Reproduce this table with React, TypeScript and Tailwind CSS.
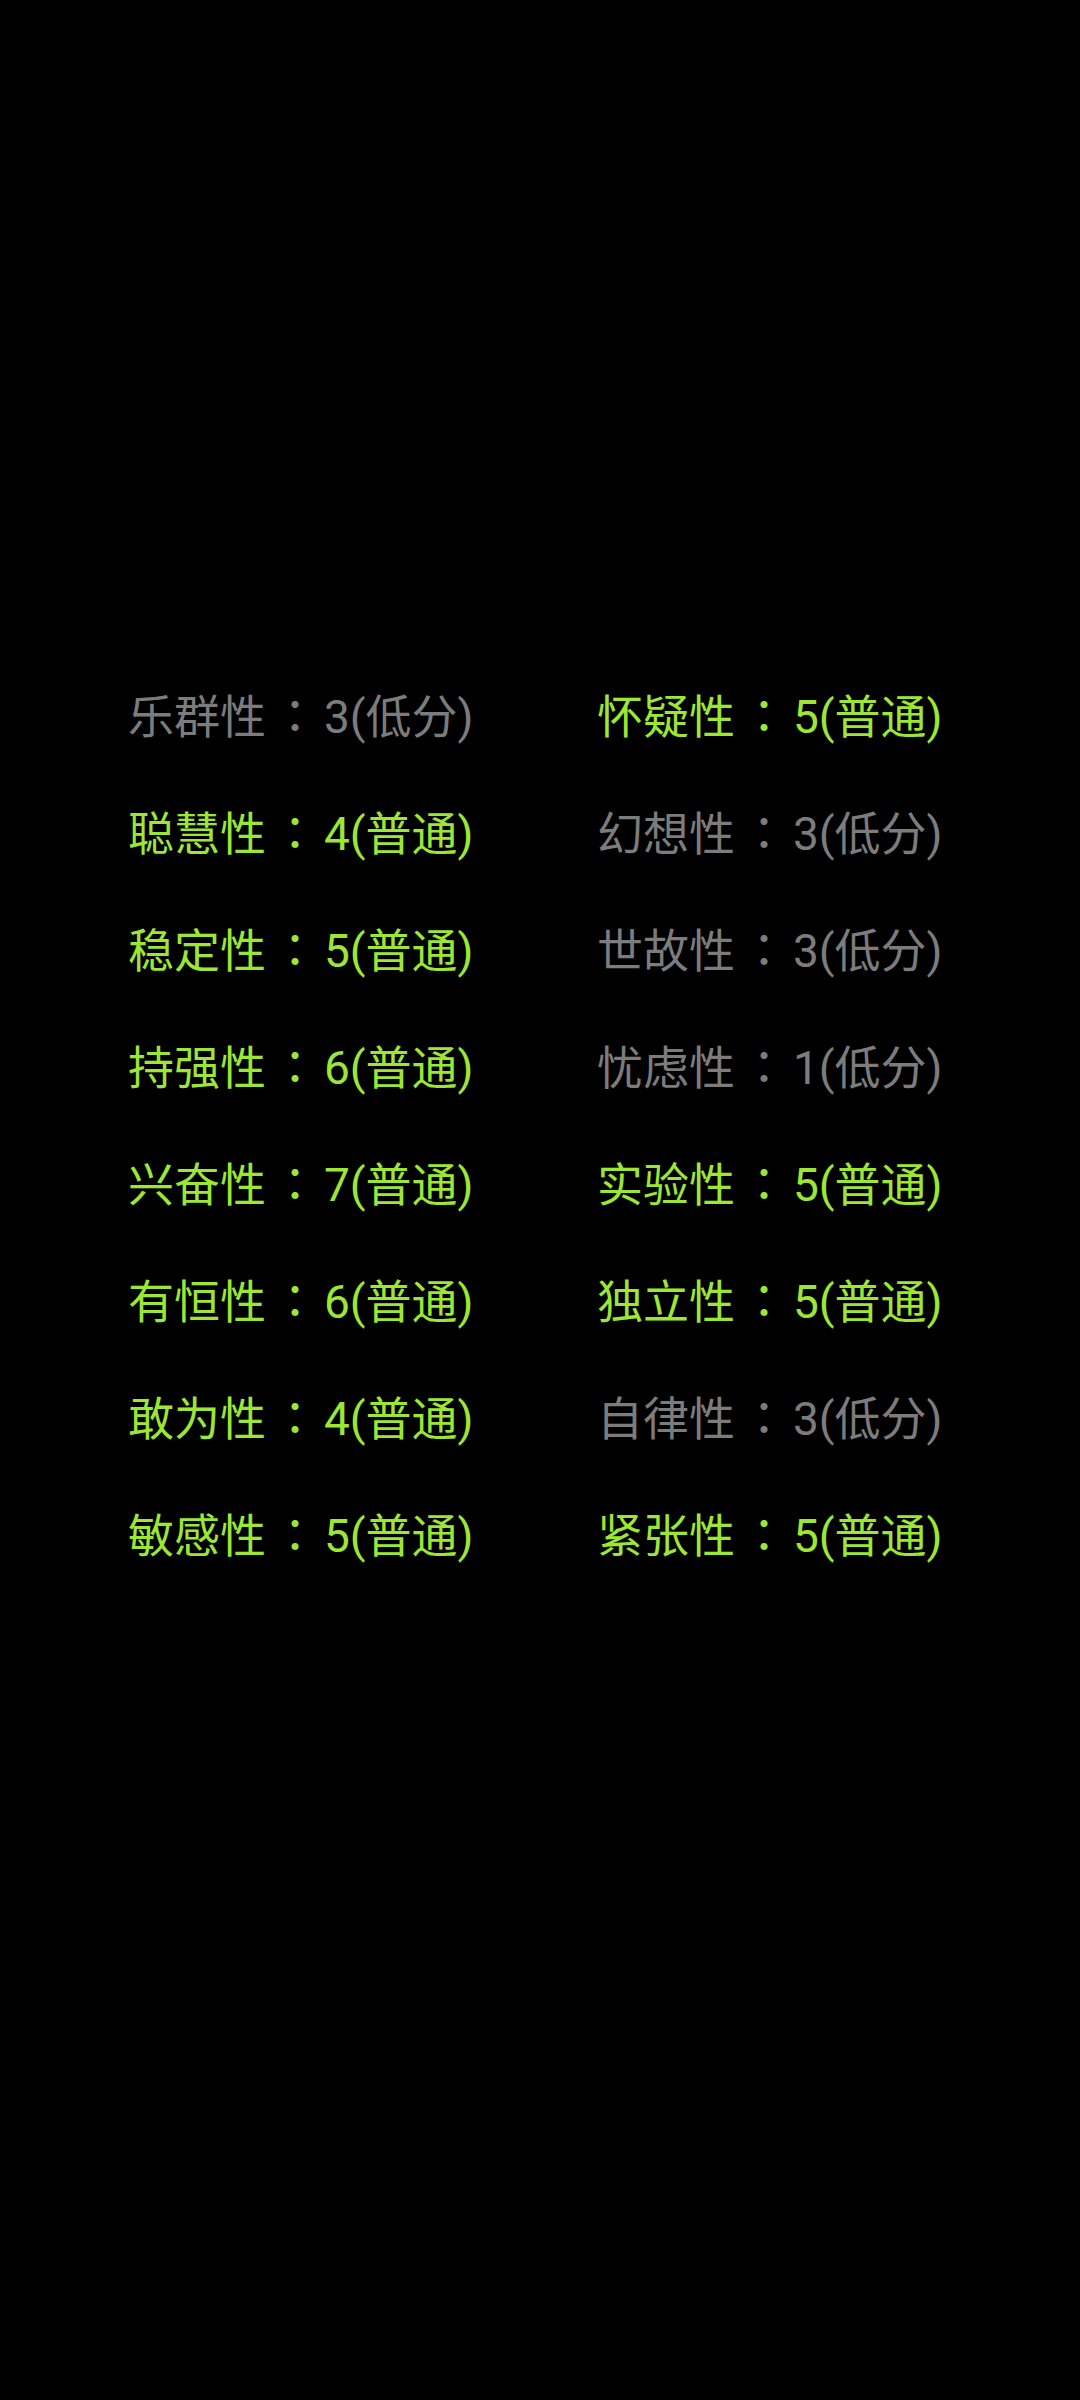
import React from "react";

type Item = { name: string; score: number; level: string };

const left: Item[] = [
  { name: "乐群性", score: 3, level: "低分" },
  { name: "聪慧性", score: 4, level: "普通" },
  { name: "稳定性", score: 5, level: "普通" },
  { name: "持强性", score: 6, level: "普通" },
  { name: "兴奋性", score: 7, level: "普通" },
  { name: "有恒性", score: 6, level: "普通" },
  { name: "敢为性", score: 4, level: "普通" },
  { name: "敏感性", score: 5, level: "普通" },
];

const right: Item[] = [
  { name: "怀疑性", score: 5, level: "普通" },
  { name: "幻想性", score: 3, level: "低分" },
  { name: "世故性", score: 3, level: "低分" },
  { name: "忧虑性", score: 1, level: "低分" },
  { name: "实验性", score: 5, level: "普通" },
  { name: "独立性", score: 5, level: "普通" },
  { name: "自律性", score: 3, level: "低分" },
  { name: "紧张性", score: 5, level: "普通" },
];

function Cell({ item }: { item: Item }) {
  const low = item.level === "低分";
  return (
    <div
      className={
        "h-[117px] leading-[117px] text-[46px] whitespace-nowrap " +
        (low ? "text-[#7c7c7c]" : "text-[#9ce634]")
      }
    >
      {item.name}
      <span
        className="inline-block w-[58px] text-center"
        style={{ fontFamily: '"Noto Sans CJK TC", sans-serif' }}
      >
        ：
      </span>
      {item.score}({item.level})
    </div>
  );
}

export default function App() {
  const rows = left.map((l, i) => [l, right[i]] as const);
  return (
    <div
      className="w-[1080px] h-[2400px] bg-black pt-[655px] pl-[128px]"
      style={{ fontFamily: 'Roboto, "Noto Sans CJK SC", sans-serif' }}
    >
      <div className="grid grid-cols-[469px_1fr]">
        {rows.map(([l, r], i) => (
          <React.Fragment key={i}>
            <Cell item={l} />
            <Cell item={r} />
          </React.Fragment>
        ))}
      </div>
    </div>
  );
}
